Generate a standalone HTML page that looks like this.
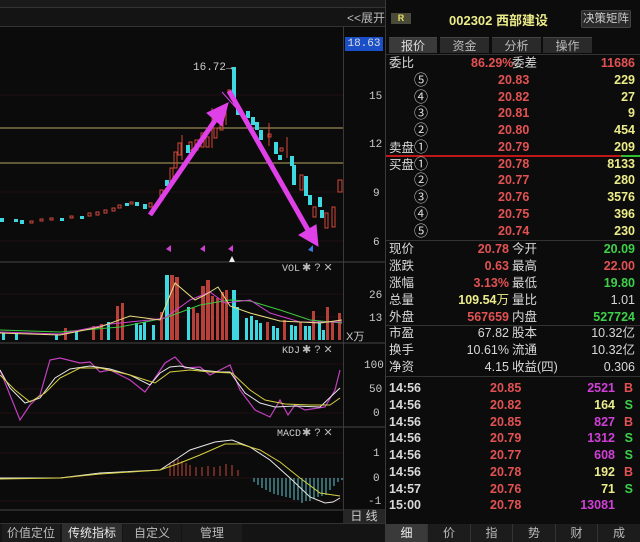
<!DOCTYPE html>
<html><head><meta charset="utf-8"><style>
*{margin:0;padding:0;box-sizing:border-box}
body{width:640px;height:542px;background:#0b0b0b;overflow:hidden;position:relative;font-family:"Liberation Sans","Noto Sans CJK SC",sans-serif;color:#ccc}
.abs{position:absolute}
#rp{left:385px;top:0;width:255px;height:542px;background:#0c0c0c;border-left:1px solid #3a3a3a}
.row{position:absolute;left:0;width:255px;height:17px;font-size:12.5px;line-height:17px}
.row span{position:absolute;white-space:nowrap}
.c{font-size:14px}
.r{color:#e35252;font-weight:bold}.y{color:#ecec8a;font-weight:bold}.g{color:#3fd04a;font-weight:bold}.m{color:#d040d8;font-weight:bold}.w{color:#d8d8d8}
.tab{position:absolute;top:37px;height:16px;background:#2a2a2a;color:#bbb;font-size:12px;text-align:center;line-height:16px;border-top:1px solid #444}
.bt{position:absolute;top:524px;height:18px;font-size:12px;line-height:18px;text-align:center;color:#bbb;background:#1c1c1c;border-right:1px solid #333}
</style></head><body>
<div class="abs" style="left:0;top:0;width:385px;height:7px;background:#1a1a1a"></div>
<div class="abs" style="left:0;top:7px;width:385px;height:20px;background:#141414;border-top:1px solid #333;border-bottom:1px solid #333"></div>
<div class="abs" style="left:347px;top:9px;font-size:12px;color:#bbb">&lt;&lt;展开</div>
<div class="abs" style="left:343px;top:27px;width:1px;height:483px;background:#3a3a3a"></div>
<div class="abs" style="left:345px;top:37px;width:38px;height:14px;background:#1a4fc8;color:#ddd;font:11px 'Liberation Mono',monospace;text-align:center;line-height:14px">18.63</div>
<svg class="abs" style="left:0;top:0" width="385" height="542">
<g stroke="#221212" stroke-width="1">
<line x1="0" y1="95" x2="343" y2="95"/><line x1="0" y1="192" x2="343" y2="192"/><line x1="0" y1="241" x2="343" y2="241"/>
<line x1="0" y1="294" x2="343" y2="294"/><line x1="0" y1="317" x2="343" y2="317"/>
<line x1="0" y1="364" x2="343" y2="364"/><line x1="0" y1="389" x2="343" y2="389"/><line x1="0" y1="413" x2="343" y2="413"/>
<line x1="0" y1="453" x2="343" y2="453"/><line x1="0" y1="478" x2="343" y2="478"/><line x1="0" y1="501" x2="343" y2="501"/>
</g>
<g stroke="#444"><line x1="0" y1="262" x2="385" y2="262"/><line x1="0" y1="343" x2="385" y2="343"/><line x1="0" y1="427" x2="385" y2="427"/><line x1="0" y1="510" x2="385" y2="510"/></g>
<line x1="0" y1="128" x2="343" y2="128" stroke="#b8a860"/><line x1="0" y1="163" x2="343" y2="163" stroke="#b8a860"/>
<g font-family="Liberation Mono,monospace" font-size="11" fill="#ccc">
<text x="369" y="99">15</text><text x="369" y="147">12</text><text x="373" y="196">9</text><text x="373" y="245">6</text>
<text x="369" y="298">26</text><text x="369" y="321">13</text><text x="346" y="340" font-family="Liberation Sans,Noto Sans CJK SC,sans-serif">X万</text>
<text x="364" y="368">100</text><text x="369" y="392">50</text><text x="373" y="416">0</text>
<text x="373" y="456">1</text><text x="373" y="481">0</text><text x="368" y="504">-1</text>
<text x="193" y="70" font-size="11">16.72→</text>
<text x="282" y="271" font-size="10">VOL</text><text x="282" y="353" font-size="10">KDJ</text><text x="277" y="436" font-size="10">MACD</text>
</g>
<g fill="#bbb" font-size="11"><text x="302" y="271">✱ ? ✕</text><text x="302" y="353">✱ ? ✕</text><text x="302" y="436">✱ ? ✕</text></g>
<g fill="#3ed8e0"><rect x="0" y="218" width="4" height="4"/><rect x="14" y="219" width="4" height="3"/><rect x="20" y="220" width="4" height="4"/><rect x="60" y="218" width="4" height="3"/><rect x="80" y="216" width="4" height="3"/><rect x="125" y="203" width="4" height="3"/><rect x="135" y="202" width="4" height="4"/><rect x="143" y="204" width="4" height="5"/></g>
<g fill="none" stroke="#d04a3a"><rect x="30" y="221" width="3" height="2"/><rect x="40" y="219" width="3" height="2"/><rect x="50" y="218" width="3" height="2"/><rect x="70" y="216" width="3" height="2"/><rect x="88" y="213" width="3" height="3"/><rect x="96" y="212" width="3" height="3"/><rect x="104" y="210" width="3" height="3"/><rect x="112" y="208" width="3" height="3"/><rect x="118" y="205" width="3" height="3"/><rect x="130" y="202" width="3" height="2"/><rect x="149" y="203" width="3" height="4"/></g>
<g fill="none" stroke="#d04a3a">
<rect x="160" y="190" width="3" height="10"/><rect x="170" y="168" width="3" height="15"/><rect x="174" y="152" width="3" height="16"/><rect x="178" y="143" width="3" height="12"/><line x1="182" y1="135" x2="182" y2="160"/><rect x="189" y="142" width="3" height="8"/><rect x="195" y="140" width="3" height="10"/><rect x="201" y="133" width="3" height="14"/><rect x="206" y="137" width="3" height="10"/><line x1="212" y1="108" x2="212" y2="148"/><rect x="214" y="128" width="3" height="10"/><rect x="220" y="118" width="3" height="12"/><line x1="226" y1="104" x2="226" y2="125"/><rect x="228" y="90" width="3" height="3"/>
<rect x="268" y="134" width="3" height="3"/><line x1="269" y1="123" x2="269" y2="146"/><rect x="280" y="148" width="3" height="3"/><line x1="287" y1="137" x2="287" y2="158"/>
<rect x="300" y="175" width="3" height="15"/><rect x="313" y="207" width="3" height="10"/><rect x="325" y="213" width="3" height="15"/><rect x="332" y="207" width="3" height="20"/><rect x="338" y="180" width="4" height="12"/>
</g>
<g fill="#3ed8e0">
<rect x="165" y="180" width="4" height="6"/><rect x="186" y="145" width="4" height="8"/><rect x="232" y="67" width="4" height="31"/><rect x="236" y="105" width="4" height="10"/><rect x="246" y="111" width="4" height="7"/><rect x="251" y="117" width="4" height="8"/><rect x="255" y="122" width="4" height="8"/>
<rect x="259" y="130" width="4" height="10"/><rect x="274" y="142" width="4" height="12"/><rect x="278" y="155" width="4" height="5"/><rect x="290" y="156" width="4" height="10"/><rect x="292" y="165" width="4" height="20"/><rect x="304" y="176" width="4" height="20"/><rect x="308" y="195" width="4" height="10"/><rect x="318" y="197" width="4" height="10"/><rect x="320" y="210" width="4" height="8"/>
</g>
<g stroke="#e040e8" fill="#e040e8">
<line x1="150" y1="215" x2="216" y2="119" stroke-width="5"/><polygon points="228,103 207,113 222,126"/>
<line x1="229" y1="91" x2="308" y2="230" stroke-width="5"/><polygon points="318,246 299,235 316,225"/>
<line x1="222" y1="92" x2="238" y2="110" stroke-width="1"/>
</g>
<g fill="#d040d0"><polygon points="166,249 171,245 171,252"/><polygon points="200,249 205,245 205,252"/><polygon points="228,249 233,245 233,252"/></g>
<polygon points="308,250 313,245 313,252" fill="#3a7ae0"/><polygon points="229,262 232,256 235,262" fill="#eee"/>
<g fill="#3ed8e0">
<rect x="2" y="333" width="3" height="7"/><rect x="15" y="334" width="3" height="6"/><rect x="55" y="335" width="3" height="5"/><rect x="75" y="332" width="3" height="8"/><rect x="107" y="322" width="3" height="18"/><rect x="135" y="323" width="3" height="17"/><rect x="139" y="325" width="3" height="15"/><rect x="143" y="322" width="3" height="18"/><rect x="152" y="325" width="3" height="15"/><rect x="165" y="275" width="4" height="65"/><rect x="187" y="307" width="3" height="33"/><rect x="232" y="290" width="4" height="50"/><rect x="236" y="307" width="3" height="33"/><rect x="245" y="318" width="3" height="22"/><rect x="250" y="316" width="3" height="24"/><rect x="255" y="320" width="3" height="20"/><rect x="259" y="323" width="3" height="17"/><rect x="272" y="326" width="3" height="14"/><rect x="276" y="328" width="3" height="12"/><rect x="290" y="325" width="3" height="15"/><rect x="294" y="326" width="3" height="14"/><rect x="304" y="326" width="3" height="14"/><rect x="308" y="326" width="3" height="14"/><rect x="318" y="321" width="3" height="19"/><rect x="322" y="330" width="3" height="10"/>
</g>
<g fill="#b84038">
<rect x="64" y="328" width="3" height="12"/><rect x="92" y="326" width="3" height="14"/><rect x="100" y="324" width="3" height="16"/><rect x="116" y="306" width="3" height="34"/><rect x="121" y="303" width="3" height="37"/><rect x="160" y="312" width="3" height="28"/><rect x="170" y="275" width="4" height="65"/><rect x="175" y="277" width="4" height="63"/><rect x="192" y="308" width="3" height="32"/><rect x="196" y="313" width="3" height="27"/><rect x="201" y="286" width="4" height="54"/><rect x="206" y="280" width="4" height="60"/><rect x="211" y="296" width="3" height="44"/><rect x="216" y="298" width="3" height="42"/><rect x="221" y="292" width="3" height="48"/><rect x="225" y="290" width="3" height="50"/><rect x="266" y="322" width="3" height="18"/><rect x="283" y="320" width="3" height="20"/><rect x="299" y="322" width="3" height="18"/><rect x="312" y="311" width="3" height="29"/><rect x="326" y="307" width="3" height="33"/><rect x="331" y="322" width="3" height="18"/><rect x="338" y="313" width="3" height="27"/>
</g>
<polyline fill="none" stroke="#3ec83e" points="0,330 60,332 120,327 165,318 200,305 230,300 250,301 280,310 310,320 342,323"/>
<polyline fill="none" stroke="#d040d0" points="0,332 60,334 110,324 150,320 165,318 190,300 210,292 225,303 250,300 270,313 300,322 342,322"/>
<polyline fill="none" stroke="#e8e080" points="0,333 60,335 100,327 130,316 160,320 175,283 195,300 205,295 218,287 230,306 250,313 280,321 320,323 342,320"/>
<polyline fill="none" stroke="#c040c0" stroke-width="1.2" points="0,370 10,395 20,420 30,405 40,395 50,360 60,358 80,363 90,362 100,372 110,370 130,380 145,392 155,378 165,363 175,357 185,368 200,367 210,375 220,370 230,365 240,390 255,410 270,417 280,400 288,415 295,405 305,410 325,407 335,390 340,370"/>
<polyline fill="none" stroke="#e8e8e8" points="0,370 10,388 25,403 40,398 55,378 70,369 90,366 110,369 130,375 150,385 160,373 170,367 180,366 200,370 220,372 230,372 245,393 260,403 275,407 295,406 320,407 340,388"/>
<polyline fill="none" stroke="#d8d040" points="0,375 15,390 30,402 45,393 60,378 80,368 100,368 130,375 155,383 170,372 190,370 210,372 232,373 250,390 265,400 285,404 310,405 330,405 340,398"/>
<g stroke="#c04a3a"><line x1="170" y1="476" x2="170" y2="464"/><line x1="174" y1="476" x2="174" y2="461"/><line x1="178" y1="476" x2="178" y2="459"/><line x1="182" y1="476" x2="182" y2="461"/><line x1="186" y1="476" x2="186" y2="463"/><line x1="190" y1="476" x2="190" y2="465"/><line x1="196" y1="476" x2="196" y2="467"/><line x1="202" y1="476" x2="202" y2="467"/><line x1="208" y1="476" x2="208" y2="466"/><line x1="214" y1="476" x2="214" y2="467"/><line x1="220" y1="476" x2="220" y2="466"/><line x1="226" y1="476" x2="226" y2="464"/><line x1="232" y1="476" x2="232" y2="465"/><line x1="238" y1="476" x2="238" y2="470"/></g>
<g stroke="#5ec8d0"><line x1="254" y1="478" x2="254" y2="482"/><line x1="258" y1="478" x2="258" y2="485"/><line x1="262" y1="478" x2="262" y2="488"/><line x1="266" y1="478" x2="266" y2="490"/><line x1="270" y1="478" x2="270" y2="492"/><line x1="274" y1="478" x2="274" y2="494"/><line x1="278" y1="478" x2="278" y2="495"/><line x1="282" y1="478" x2="282" y2="496"/><line x1="286" y1="478" x2="286" y2="497"/><line x1="290" y1="478" x2="290" y2="498"/><line x1="294" y1="478" x2="294" y2="500"/><line x1="298" y1="478" x2="298" y2="500"/><line x1="302" y1="478" x2="302" y2="503"/><line x1="306" y1="478" x2="306" y2="501"/><line x1="310" y1="478" x2="310" y2="501"/><line x1="314" y1="478" x2="314" y2="499"/><line x1="318" y1="478" x2="318" y2="497"/><line x1="322" y1="478" x2="322" y2="496"/><line x1="326" y1="478" x2="326" y2="495"/><line x1="330" y1="478" x2="330" y2="490"/><line x1="334" y1="478" x2="334" y2="486"/><line x1="338" y1="478" x2="338" y2="482"/><line x1="342" y1="478" x2="342" y2="480"/></g>
<polyline fill="none" stroke="#e8e8e8" points="0,478 60,478 100,473 160,470 175,460 190,450 215,442 232,440 250,447 270,460 290,478 310,497 325,503 333,502 340,498"/>
<polyline fill="none" stroke="#d8d040" points="0,479 60,478 100,474 160,470 180,463 200,455 225,444 240,444 260,450 280,462 300,478 320,493 340,496"/>
</svg>
<div class="abs" style="left:343px;top:510px;width:42px;height:13px;background:#262626;color:#ccc;font-size:12px;text-align:center;line-height:13px">日 线</div>
<div class="abs" style="left:0;top:523px;width:385px;height:19px;background:#141414;border-top:1px solid #333"></div>
<div class="abs" style="left:2px;top:524px;width:58px;height:18px;background:#1c1c1c;color:#bbb;font-size:12px;line-height:18px;text-align:center">价值定位</div>
<div class="abs" style="left:62px;top:524px;width:60px;height:18px;background:#2e2e2e;color:#e8e8e8;font-size:12px;line-height:18px;text-align:center">传统指标</div>
<div class="abs" style="left:123px;top:524px;width:58px;height:18px;background:#1c1c1c;color:#bbb;font-size:12px;line-height:18px;text-align:center">自定义</div>
<div class="abs" style="left:182px;top:524px;width:60px;height:18px;background:#1c1c1c;color:#bbb;font-size:12px;line-height:18px;text-align:center">管理</div>

<div id="rp" class="abs">
<div class="abs" style="left:5px;top:13px;width:20px;height:11px;background:#4a4a3a;color:#e8e060;font-size:9px;font-weight:bold;text-align:center;line-height:11px">R</div>
<div class="abs" style="left:63px;top:10px;font-size:13px;font-weight:bold;color:#ecec8a">002302 西部建设</div>
<div class="abs" style="left:195px;top:10px;width:50px;height:18px;background:#2a2a2a;border:1px solid #444;color:#ccc;font-size:11.5px;text-align:center;line-height:16px;border-radius:2px">决策矩阵</div>
<div class="tab" style="left:3px;width:48px;background:#3a3a3a;color:#ddd">报价</div>
<div class="tab" style="left:54px;width:49px">资金</div>
<div class="tab" style="left:106px;width:49px">分析</div>
<div class="tab" style="left:157px;width:49px">操作</div>
<div class="abs" style="left:0;top:54px;width:255px;height:1px;background:#333"></div>
<div class="row" style="top:55px"><span class="w" style="left:3px">委比</span><span class="r" style="left:85px">86.29%</span><span class="w" style="left:126px">委差</span><span class="r" style="right:6px">11686</span></div>
<div class="row" style="top:72px"><span class="w c" style="left:28px">⑤</span><span class="r" style="left:112px">20.83</span><span class="y" style="right:6px">229</span></div>
<div class="row" style="top:89px"><span class="w c" style="left:28px">④</span><span class="r" style="left:112px">20.82</span><span class="y" style="right:6px">27</span></div>
<div class="row" style="top:105px"><span class="w c" style="left:28px">③</span><span class="r" style="left:112px">20.81</span><span class="y" style="right:6px">9</span></div>
<div class="row" style="top:122px"><span class="w c" style="left:28px">②</span><span class="r" style="left:112px">20.80</span><span class="y" style="right:6px">454</span></div>
<div class="row" style="top:139px"><span class="w" style="left:3px">卖盘<span class="c" style="position:static">①</span></span><span class="r" style="left:112px">20.79</span><span class="y" style="right:6px">209</span></div>
<div class="abs" style="left:0;top:155px;width:235px;height:2px;background:#c01818"></div>
<div class="abs" style="left:235px;top:155px;width:20px;height:2px;background:#30c030"></div>
<div class="row" style="top:156px"><span class="w" style="left:3px">买盘<span class="c" style="position:static">①</span></span><span class="r" style="left:112px">20.78</span><span class="y" style="right:6px">8133</span></div>
<div class="row" style="top:172px"><span class="w c" style="left:28px">②</span><span class="r" style="left:112px">20.77</span><span class="y" style="right:6px">280</span></div>
<div class="row" style="top:189px"><span class="w c" style="left:28px">③</span><span class="r" style="left:112px">20.76</span><span class="y" style="right:6px">3576</span></div>
<div class="row" style="top:206px"><span class="w c" style="left:28px">④</span><span class="r" style="left:112px">20.75</span><span class="y" style="right:6px">396</span></div>
<div class="row" style="top:223px"><span class="w c" style="left:28px">⑤</span><span class="r" style="left:112px">20.74</span><span class="y" style="right:6px">230</span></div>
<div class="abs" style="left:0;top:240px;width:255px;height:1px;background:#333"></div>
<div class="row" style="top:241px"><span class="w" style="left:3px">现价</span><span class="r" style="right:132px">20.78</span><span class="w" style="left:126px">今开</span><span class="g" style="right:6px">20.09</span></div>
<div class="row" style="top:258px"><span class="w" style="left:3px">涨跌</span><span class="r" style="right:132px">0.63</span><span class="w" style="left:126px">最高</span><span class="r" style="right:6px">22.00</span></div>
<div class="row" style="top:275px"><span class="w" style="left:3px">涨幅</span><span class="r" style="right:132px">3.13%</span><span class="w" style="left:126px">最低</span><span class="g" style="right:6px">19.80</span></div>
<div class="row" style="top:292px"><span class="w" style="left:3px">总量</span><span class="y" style="right:132px">109.54<span style="position:static;color:#ecec8a;font-weight:normal">万</span></span><span class="w" style="left:126px">量比</span><span class="w" style="right:6px">1.01</span></div>
<div class="row" style="top:309px"><span class="w" style="left:3px">外盘</span><span class="r" style="right:132px">567659</span><span class="w" style="left:126px">内盘</span><span class="g" style="right:6px">527724</span></div>
<div class="abs" style="left:0;top:325px;width:255px;height:1px;background:#333"></div>
<div class="row" style="top:325px"><span class="w" style="left:3px">市盈</span><span class="w" style="right:132px">67.82</span><span class="w" style="left:126px">股本</span><span class="w" style="right:6px">10.32亿</span></div>
<div class="row" style="top:342px"><span class="w" style="left:3px">换手</span><span class="w" style="right:132px">10.61%</span><span class="w" style="left:126px">流通</span><span class="w" style="right:6px">10.32亿</span></div>
<div class="row" style="top:359px"><span class="w" style="left:3px">净资</span><span class="w" style="right:132px">4.15</span><span class="w" style="left:126px">收益(四)</span><span class="w" style="right:6px">0.306</span></div>
<div class="abs" style="left:0;top:376px;width:255px;height:1px;background:#333"></div>
<div class="row" style="top:380px"><span class="w" style="left:3px;font-weight:bold">14:56</span><span class="r" style="left:104px">20.85</span><span class="m" style="right:26px">2521</span><span class="r" style="right:8px">B</span></div>
<div class="row" style="top:397px"><span class="w" style="left:3px;font-weight:bold">14:56</span><span class="r" style="left:104px">20.82</span><span class="y" style="right:26px">164</span><span class="g" style="right:8px">S</span></div>
<div class="row" style="top:414px"><span class="w" style="left:3px;font-weight:bold">14:56</span><span class="r" style="left:104px">20.85</span><span class="m" style="right:26px">827</span><span class="r" style="right:8px">B</span></div>
<div class="row" style="top:430px"><span class="w" style="left:3px;font-weight:bold">14:56</span><span class="r" style="left:104px">20.79</span><span class="m" style="right:26px">1312</span><span class="g" style="right:8px">S</span></div>
<div class="row" style="top:447px"><span class="w" style="left:3px;font-weight:bold">14:56</span><span class="r" style="left:104px">20.77</span><span class="m" style="right:26px">608</span><span class="g" style="right:8px">S</span></div>
<div class="row" style="top:464px"><span class="w" style="left:3px;font-weight:bold">14:56</span><span class="r" style="left:104px">20.78</span><span class="y" style="right:26px">192</span><span class="r" style="right:8px">B</span></div>
<div class="row" style="top:481px"><span class="w" style="left:3px;font-weight:bold">14:57</span><span class="r" style="left:104px">20.76</span><span class="y" style="right:26px">71</span><span class="g" style="right:8px">S</span></div>
<div class="row" style="top:497px"><span class="w" style="left:3px;font-weight:bold">15:00</span><span class="r" style="left:104px">20.78</span><span class="m" style="right:26px">13081</span></div>
<div class="bt" style="left:0;width:42px;background:#3a3a3a;color:#eee">细</div>
<div class="bt" style="left:42px;width:43px">价</div>
<div class="bt" style="left:85px;width:42px">指</div>
<div class="bt" style="left:127px;width:43px">势</div>
<div class="bt" style="left:170px;width:42px">财</div>
<div class="bt" style="left:212px;width:43px">成</div>
</div>
</body></html>
